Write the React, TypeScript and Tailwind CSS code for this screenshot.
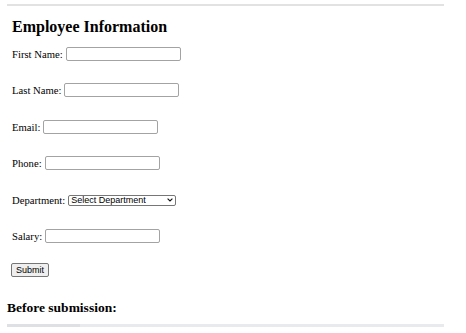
import React from 'react';

const serif = { fontFamily: '"Liberation Serif", "Times New Roman", serif' };

const inputCls =
  'h-[14px] w-[115px] ml-[3px] border border-[#a3a3a3] rounded-[2px] bg-white px-[2px] text-[9px] outline-none';

const Field: React.FC<{ label: string; mt: string }> = ({ label, mt }) => (
  <div className={`flex items-center h-[14px] ${mt}`}>
    <span className="text-[10.67px] leading-[14px] text-black whitespace-nowrap">{label}</span>
    <input type="text" className={inputCls} />
  </div>
);

export default function App() {
  return (
    <div className="w-[466px] h-[333px] overflow-hidden bg-white px-[7px]" style={serif}>
      {/* top rule */}
      <div className="mt-[4px] h-[2px] w-[437px] bg-[#e2e2e2]" />

      <div className="pl-[5px]">
        <h2 className="mt-[12px] text-[16px] leading-[18px] font-bold text-black">Employee Information</h2>

        <form onSubmit={(e) => e.preventDefault()} className="flex flex-col">
          <Field label="First Name:" mt="mt-[11px]" />
          <Field label="Last Name:" mt="mt-[22px]" />
          <Field label="Email:" mt="mt-[23px]" />
          <Field label="Phone:" mt="mt-[22px]" />

          <div className="flex items-center h-[14px] mt-[23px]">
            <span className="text-[10.67px] leading-[14px] text-black whitespace-nowrap">Department:</span>
            <div className="relative ml-[3px] flex items-center">
              <select
                defaultValue=""
                className="appearance-none h-[11px] w-[108px] border border-[#767676] rounded-[2px] bg-white pl-[2px] text-[9px] leading-[9px] text-black outline-none"
                style={{ fontFamily: '"Liberation Sans", Arial, sans-serif' }}
              >
                <option value="">Select Department</option>
                <option value="hr">HR</option>
                <option value="it">IT</option>
                <option value="finance">Finance</option>
              </select>
              <svg
                className="absolute right-[3px] pointer-events-none"
                width="6"
                height="4"
                viewBox="0 0 6 4"
              >
                <path d="M0.6 0.6 L3 3 L5.4 0.6" fill="none" stroke="#111" strokeWidth="1.1" />
              </svg>
            </div>
          </div>

          <Field label="Salary:" mt="mt-[22px]" />

          <div className="mt-[20px] h-[14px] flex">
            <button
              type="submit"
              className="-ml-px h-[14px] w-[38px] border border-[#767676] rounded-[2px] bg-[#efefef] text-[9px] leading-[12px] text-black"
              style={{ fontFamily: '"Liberation Sans", Arial, sans-serif' }}
            >
              Submit
            </button>
          </div>
        </form>
      </div>

      <h3 className="mt-[23px] text-[13.5px] leading-[15px] font-bold text-black">Before submission:</h3>

      {/* output box top edge */}
      <div className="mt-[9px] flex h-[3px] w-[437px] bg-[#e8eaed]">
        <div className="w-[73px] bg-[#dfe0e3]" />
      </div>
    </div>
  );
}
